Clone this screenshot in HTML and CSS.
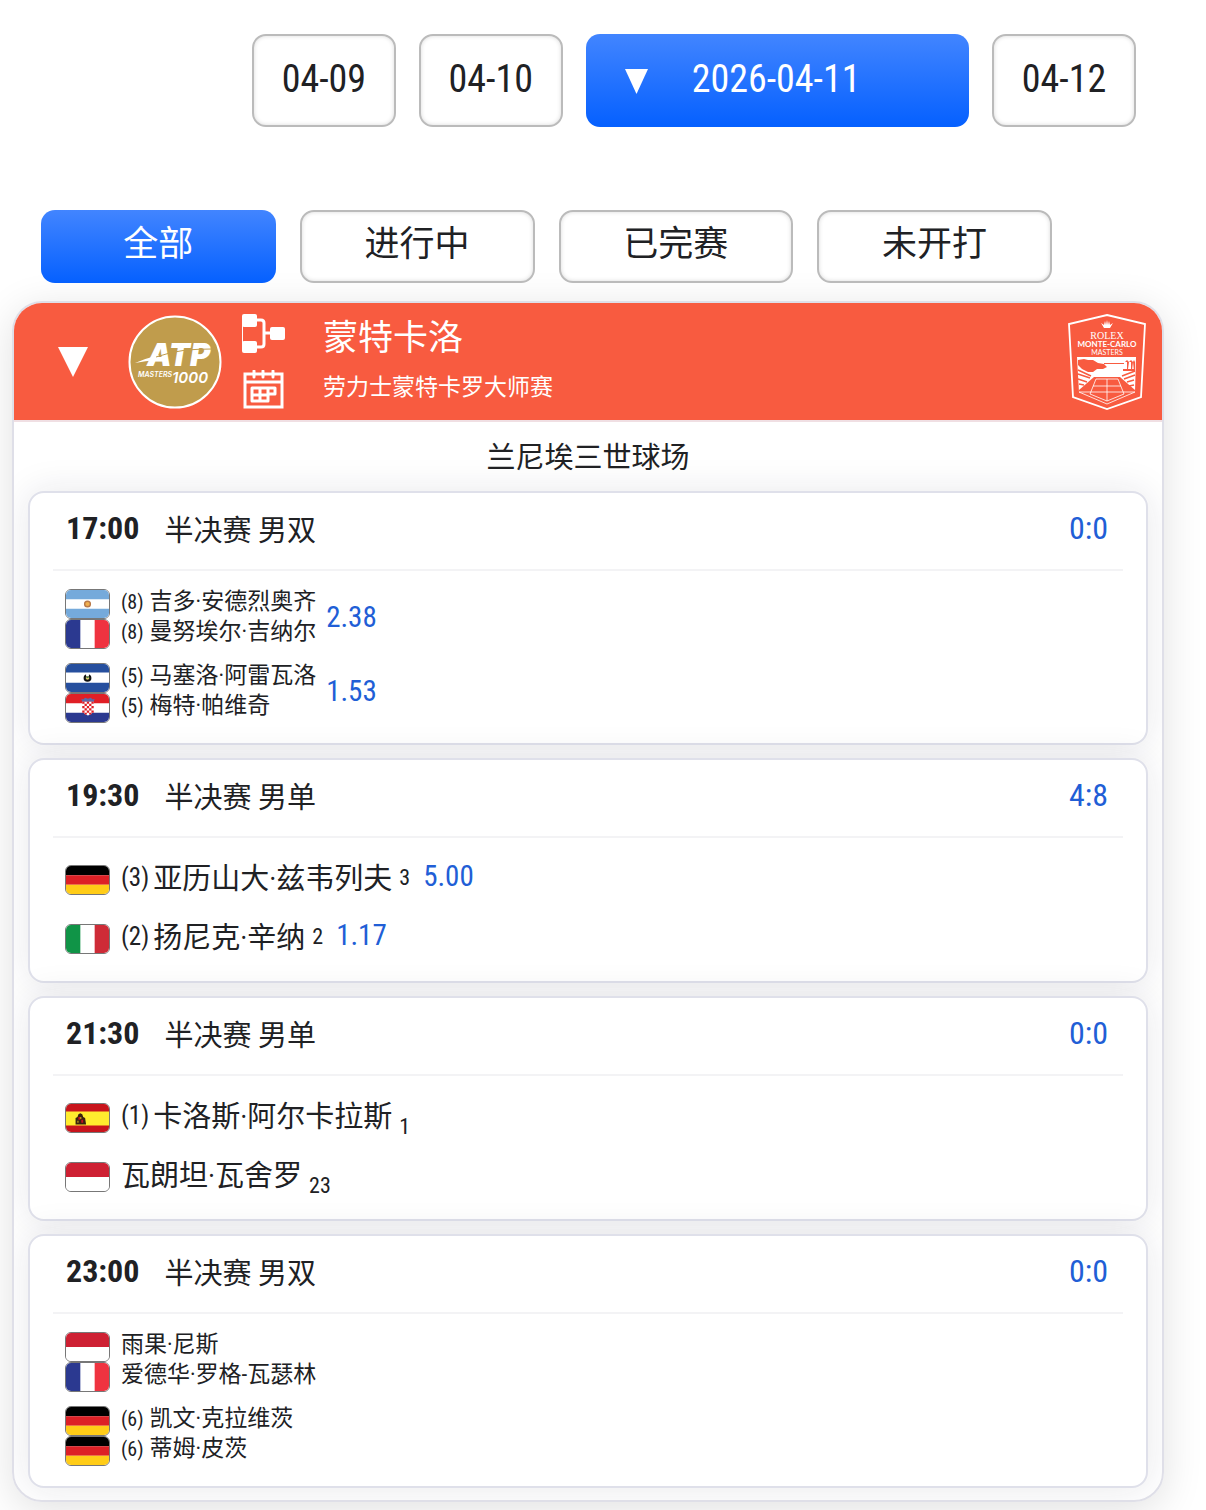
FILE: index.html
```html
<!DOCTYPE html>
<html lang="zh-CN">
<head>
    <meta charset="UTF-8">
    <meta name="viewport" content="width=device-width, initial-scale=1.0">
    <title>蒙特卡洛 2026-04-11</title>
    <link rel="stylesheet" href="styles.css">
</head>
<body>
    <!-- Flags shared by all matches -->
    <svg class="sprite" aria-hidden="true">
        <symbol id="arg" viewBox="0 0 45 30" preserveAspectRatio="none">
            <path fill="#fff" d="M0 0h45v30H0z"/>
            <path fill="#75aadb" d="M0 0h45v10H0zM0 20h45v10H0z"/>
            <circle cx="22.500" cy="15" r="3" fill="#f0b050" stroke="#b97a4a" stroke-width="1.500"/>
        </symbol>
        <symbol id="fra" viewBox="0 0 45 30" preserveAspectRatio="none">
            <path fill="#fff" d="M0 0h45v30H0z"/>
            <path fill="#2b3990" d="M0 0h15v30H0z"/>
            <path fill="#ef3340" d="M30 0h15v30H30z"/>
        </symbol>
        <symbol id="esa" viewBox="0 0 45 30" preserveAspectRatio="none">
            <path fill="#fff" d="M0 0h45v30H0z"/>
            <path fill="#264f9e" d="M0 0h45v9H0zM0 20h45v10H0z"/>
            <circle cx="22.500" cy="15" r="3" fill="#d9c56a" stroke="#111" stroke-width="2.200"/>
            <path fill="#fff" d="M21 10h3v3h-3z"/>
            <path fill="#3a7d44" d="M21 15l1.500-2 1.500 2z"/>
        </symbol>
        <symbol id="cro" viewBox="0 0 45 30" preserveAspectRatio="none">
            <path fill="#fff" d="M0 0h45v30H0z"/>
            <path fill="#e01f26" d="M0 0h45v10H0z"/>
            <path fill="#2b3990" d="M0 20h45v10H0z"/>
            <path fill="#fff" d="M17 8h12v9q0 4-6 6-6-2-6-6z"/>
            <path fill="#e01f26" d="M17 8h2.400v2.400H17zM21.800 8h2.400v2.400h-2.400zM26.600 8H29v2.400h-2.400zM19.400 10.400h2.400v2.400h-2.400zM24.200 10.400h2.400v2.400h-2.400zM17 12.800h2.400v2.400H17zM21.800 12.800h2.400v2.400h-2.400zM26.600 12.800H29v2.400h-2.400zM19.400 15.200h2.400v2.400h-2.400zM24.200 15.200h2.400v2.400h-2.400zM17 17.600h2.400V20H17zM21.800 17.600h2.400V20h-2.400zM26.600 17.600H29V20h-2.400zM19.400 20h2.400v2h-2.400zM24.200 20h2.400v2h-2.400z"/>
            <path fill="#5b6aa8" d="M16 5l2 1 2-2 3 1 3-1 2 2 2-1-1 3H17z"/>
        </symbol>
        <symbol id="ger" viewBox="0 0 45 30" preserveAspectRatio="none">
            <path d="M0 0h45v10H0z"/>
            <path fill="#dd2026" d="M0 10h45v10H0z"/>
            <path fill="#ffcc17" d="M0 20h45v10H0z"/>
        </symbol>
        <symbol id="ita" viewBox="0 0 45 30" preserveAspectRatio="none">
            <path fill="#fff" d="M0 0h45v30H0z"/>
            <path fill="#109447" d="M0 0h15v30H0z"/>
            <path fill="#ce2b37" d="M30 0h15v30H30z"/>
        </symbol>
        <symbol id="esp" viewBox="0 0 45 30" preserveAspectRatio="none">
            <path fill="#c8141c" d="M0 0h45v30H0z"/>
            <path fill="#ffec2e" d="M0 8h45v15H0z"/>
            <path fill="#3a2010" d="M10 22v-7l2-1 1-3 2-1 2 1 1 3 2 1 1 7z"/>
            <path fill="#c8141c" d="M13 14h2v3h-2zM16 17h2v3h-2z"/>
            <path fill="#e8c020" d="M15 14h1v2h-1zM12 18h1v2h-1z"/>
        </symbol>
        <symbol id="mon" viewBox="0 0 45 30" preserveAspectRatio="none">
            <path fill="#fff" d="M0 0h45v30H0z"/>
            <path fill="#ce2033" d="M0 0h45v15H0z"/>
        </symbol>
    </svg>

    <nav class="dates" aria-label="日期">
        <button class="btn date">04-09</button>
        <button class="btn date">04-10</button>
        <div class="date-picker">
            <select class="btn date active" aria-label="选择日期">
                <option>2026-04-11</option>
            </select>
            <svg class="picker-arrow" viewBox="0 0 24 24" preserveAspectRatio="none" aria-hidden="true"><path fill="#fff" d="M0 0h24L12 24z"/></svg>
        </div>
        <button class="btn date">04-12</button>
    </nav>

    <nav class="filters" aria-label="比赛状态">
        <button class="btn filter active">全部</button>
        <button class="btn filter">进行中</button>
        <button class="btn filter">已完赛</button>
        <button class="btn filter">未开打</button>
    </nav>

    <main class="tournament">
        <header class="tour-header">
            <button class="toggle" aria-label="收起">
                <svg viewBox="0 0 30 30"><path fill="#fff" d="M0 0h30L15 30z"/></svg>
            </button>
            <svg class="atp" viewBox="0 0 94 94" role="img" aria-label="ATP Masters 1000">
                <circle cx="47" cy="47" r="45.500" fill="#c09c4c" stroke="#fff" stroke-width="2"/>
                <text class="atp-name" x="19" y="51">ATP</text>
                <path fill="#fff" d="M7 48q12-5 24-8l-2 5q-12 1-22 3z"/>
                <path fill="none" stroke="#c09c4c" d="M28 42q14-5 30-7 14-1 26-1"/>
                <text class="atp-masters" x="10" y="62">MASTERS</text>
                <text class="atp-level" x="44" y="68">1000</text>
            </svg>
            <div class="tour-links">
                <a href="#draw" aria-label="签表">
                    <svg viewBox="0 0 44 40" fill="#fff">
                        <rect x="0" y="0" width="15" height="13" rx="2"/>
                        <rect x="0" y="27" width="15" height="12" rx="2"/>
                        <rect x="28" y="13" width="15" height="13" rx="2"/>
                        <path fill="none" stroke="#fff" stroke-width="3" d="M14 6h5q3 0 3 3v21q0 3-3 3h-5M22 19h7"/>
                        <path d="M0 4h1v31H0z"/>
                    </svg>
                </a>
                <a href="#schedule" aria-label="赛程">
                    <svg viewBox="0 0 44 40" fill="none" stroke="#fff" stroke-width="3">
                        <path d="M3 4h37v33H3zM3 12h37"/>
                        <path stroke-linecap="round" d="M12 1v6M21 1v6M31 1v6"/>
                        <path stroke-linejoin="round" d="M10 18h23v6h-7v7H10zM10 25h16M18 18v13M26 18v7"/>
                    </svg>
                </a>
            </div>
            <div class="tour-title">
                <h1>蒙特卡洛</h1>
                <p>劳力士蒙特卡罗大师赛</p>
            </div>
            <svg class="event-logo" viewBox="0 0 78 98" role="img" aria-label="Rolex Monte-Carlo Masters">
                <path fill="none" stroke="#fff" stroke-width="1.800" d="M39 2l38 9-4 73-34 12L5 84 1 11z"/>
                <path fill="#fff" d="M36 15l-3-5 3 2 1-4 1 4 1-5 1 5 1-4 1 4 3-2-3 5z"/>
                <text class="logo-rolex" x="39" y="26">ROLEX</text>
                <text class="logo-name" x="39" y="34">MONTE-CARLO</text>
                <text class="logo-sub" x="39" y="42">MASTERS</text>
                <!-- bay, stands and court -->
                <path fill="#fff" d="M9 44h59l-1 35H11z"/>
                <path fill="#f85b40" d="M10 47l6-1 4 1 5 0 5 3 6 1 3 3-4 2-6 0-4 3-5 0-6-3-4-4zM36 50h20v1H36zM57 49l2-2 2 2-1 7h-1v-7zM61 49l2-2 2 2-1 8h-1v-8zM65 49l1-2 1 2v9h-1zM55 56h12v2H55z"/>
                <path fill="#f85b40" d="M26 64h26l15 13v2H11v-2z"/>
                <path fill="none" stroke="#f85b40" stroke-width="1.500" d="M10 57l13 6M10 61l12 4M10 66l9 3M11 71l5 1M67 58l-13 5M67 62l-11 4M66 67l-7 2M66 72l-5 1"/>
                <path fill="none" stroke="#fff" stroke-width=".8" d="M28 66h22l6 15-17 7-17-7zM39 66v22M25 73h28M11 79h56l-28 12-28-12"/>
            </svg>
        </header>

        <h2 class="court">兰尼埃三世球场</h2>

        <section class="match">
            <div class="match-head">
                <time>17:00</time>
                <span class="round">半决赛 男双</span>
                <a class="score" href="#m1">0:0</a>
            </div>
            <div class="players doubles">
                <div class="team">
                    <div class="names">
                        <p><svg class="flag"><use href="#arg"/></svg><span class="seed">(8)</span><span>吉多·安德烈奥齐</span></p>
                        <p><svg class="flag"><use href="#fra"/></svg><span class="seed">(8)</span><span>曼努埃尔·吉纳尔</span></p>
                    </div>
                    <span class="odds">2.38</span>
                </div>
                <div class="team">
                    <div class="names">
                        <p><svg class="flag"><use href="#esa"/></svg><span class="seed">(5)</span><span>马塞洛·阿雷瓦洛</span></p>
                        <p><svg class="flag"><use href="#cro"/></svg><span class="seed">(5)</span><span>梅特·帕维奇</span></p>
                    </div>
                    <span class="odds">1.53</span>
                </div>
            </div>
        </section>

        <section class="match">
            <div class="match-head">
                <time>19:30</time>
                <span class="round">半决赛 男单</span>
                <a class="score" href="#m2">4:8</a>
            </div>
            <div class="players singles">
                <p><svg class="flag"><use href="#ger"/></svg><span class="seed">(3)</span><span>亚历山大·兹韦列夫</span><span class="rank">3</span><span class="odds">5.00</span></p>
                <p><svg class="flag"><use href="#ita"/></svg><span class="seed">(2)</span><span>扬尼克·辛纳</span><span class="rank">2</span><span class="odds">1.17</span></p>
            </div>
        </section>

        <section class="match">
            <div class="match-head">
                <time>21:30</time>
                <span class="round">半决赛 男单</span>
                <a class="score" href="#m3">0:0</a>
            </div>
            <div class="players singles">
                <p><svg class="flag"><use href="#esp"/></svg><span class="seed">(1)</span><span>卡洛斯·阿尔卡拉斯</span><sub class="rank">1</sub></p>
                <p><svg class="flag"><use href="#mon"/></svg><span>瓦朗坦·瓦舍罗</span><sub class="rank">23</sub></p>
            </div>
        </section>

        <section class="match">
            <div class="match-head">
                <time>23:00</time>
                <span class="round">半决赛 男双</span>
                <a class="score" href="#m4">0:0</a>
            </div>
            <div class="players doubles">
                <div class="team">
                    <div class="names">
                        <p><svg class="flag"><use href="#mon"/></svg><span>雨果·尼斯</span></p>
                        <p><svg class="flag"><use href="#fra"/></svg><span>爱德华·罗格-瓦瑟林</span></p>
                    </div>
                </div>
                <div class="team">
                    <div class="names">
                        <p><svg class="flag"><use href="#ger"/></svg><span class="seed">(6)</span><span>凯文·克拉维茨</span></p>
                        <p><svg class="flag"><use href="#ger"/></svg><span class="seed">(6)</span><span>蒂姆·皮茨</span></p>
                    </div>
                </div>
            </div>
        </section>
    </main>
</body>
</html>
```
FILE: styles.css
```css
* {
    box-sizing: border-box;
}
body {
    margin: 0;
    padding: 34px 0 8px;
    background: #fff;
    color: #202124;
    font-family: "Roboto Condensed", Roboto, "Noto Sans CJK SC", sans-serif;
    font-weight: 400;
}
h1, h2, p {
    margin: 0;
    font-weight: 400;
}
svg {
    display: block;
}
.sprite {
    position: absolute;
    width: 0;
    height: 0;
}

/* buttons */
.btn {
    width: 100%;
    border: 2px solid #bbb;
    border-radius: 14px;
    background: #fff;
    box-shadow: inset 0 0 4px rgba(0, 0, 0, 0.15);
    color: #202124;
    font-family: inherit;
}
.btn.active {
    border: 0;
    background: linear-gradient(#4285ff, #0560ff);
    box-shadow: none;
    color: #fff;
}
.dates {
    display: grid;
    grid-template-columns: 3fr 3fr 8fr 3fr;
    gap: 23px;
    padding: 0 70px 0 252px;
}
.date {
    height: 93px;
    padding: 0 0 4px;
    font-size: 38px;
}
.date-picker {
    position: relative;
}
.date-picker .date {
    appearance: none;
    padding-left: 106px;
}
.picker-arrow {
    position: absolute;
    left: 39px;
    top: 35px;
    width: 23px;
    height: 25px;
    pointer-events: none;
}
.filters {
    display: grid;
    grid-template-columns: repeat(4, 1fr);
    gap: 24px;
    margin-top: 83px;
    padding: 0 154px 0 41px;
}
.filter {
    height: 73px;
    padding: 0 0 12px;
    font-size: 35px;
}

/* tournament */
.tournament {
    margin: 18px 42px 0 12px;
    padding-bottom: 12px;
    border: 2px solid #dfdfe8;
    border-radius: 30px;
    overflow: hidden;
    box-shadow: 0 8px 40px rgba(0, 0, 0, 0.12);
}
.tour-header {
    display: flex;
    align-items: center;
    height: 119px;
    padding: 0 16px 0 44px;
    border-bottom: 2px solid #f0dfe3;
    background: #f85b40;
    color: #fff;
}
.toggle {
    width: 30px;
    height: 30px;
    margin-right: 40px;
    padding: 0;
    border: 0;
    background: none;
}
.atp {
    width: 94px;
    height: 94px;
    margin-right: 20px;
}
.atp text {
    fill: #fff;
    font-family: Inter, sans-serif;
    font-style: italic;
}
.atp .atp-name {
    font-size: 31px;
    font-weight: 900;
}
.atp .atp-masters {
    font-size: 7px;
    font-weight: 600;
}
.atp .atp-level {
    font-size: 15px;
    font-weight: 600;
}
.tour-links {
    display: grid;
    gap: 16px;
}
.tour-links svg {
    width: 44px;
    height: 40px;
}
.tour-title {
    margin-left: 37px;
}
.tour-title h1 {
    font-size: 35px;
    line-height: 52px;
}
.tour-title p {
    font-size: 23px;
    line-height: 46px;
}
.event-logo {
    width: 78px;
    height: 98px;
    margin-left: auto;
}
.event-logo text {
    fill: #fff;
    text-anchor: middle;
}
.event-logo .logo-rolex {
    font-family: "Liberation Serif", serif;
    font-size: 10px;
}
.event-logo .logo-name {
    font-family: Lato, sans-serif;
    font-size: 8px;
    font-weight: 700;
}
.event-logo .logo-sub {
    font-family: Lato, sans-serif;
    font-size: 7px;
}
.court {
    padding-top: 4px;
    font-size: 29px;
    line-height: 65px;
    text-align: center;
}

/* matches */
.match {
    margin: 0 14px 13px;
    padding: 0 23px;
    border: 2px solid #dfe0ea;
    border-radius: 16px;
    background: #fff;
    box-shadow: 0 0 36px rgba(30, 30, 60, 0.1);
}
.match:last-child {
    margin-bottom: 0;
}
.match-head {
    display: flex;
    align-items: center;
    height: 78px;
    padding: 0 15px 6px 13px;
    border-bottom: 2px solid #f3f3f5;
}
.match-head time {
    font-size: 32px;
    font-weight: 700;
}
.round {
    margin-left: 25px;
    font-size: 29px;
}
.score {
    margin-left: auto;
    font-size: 32px;
}
.score, .odds {
    color: #215ed6;
    text-decoration: none;
}
.odds {
    font-size: 29px;
}
.players {
    padding-left: 12px;
}
.players p {
    display: flex;
    align-items: center;
}
.flag {
    width: 45px;
    height: 30px;
    margin-right: 11px;
    border: 1px solid #777;
    border-radius: 6px;
}
.doubles {
    display: grid;
    gap: 14px;
    padding-top: 18px;
    padding-bottom: 20px;
}
.team {
    display: flex;
    align-items: center;
}
.doubles p {
    height: 30px;
    font-size: 23px;
    line-height: 24px;
}
.doubles span {
    padding-bottom: 4px;
}
.doubles .seed {
    margin-right: 6px;
    font-size: 20px;
}
.doubles .odds {
    margin-left: 10px;
}
.singles {
    padding-top: 12px;
    padding-bottom: 13px;
}
.singles p {
    height: 59px;
    padding-bottom: 8px;
    font-size: 29px;
}
.singles .flag {
    margin-top: 8px;
}
.singles .seed {
    margin-right: 4px;
    padding-top: 4px;
    font-size: 25px;
}
.rank {
    margin-left: 7px;
    padding-top: 4px;
    font-size: 22px;
}
sub.rank {
    align-self: flex-end;
}
.singles .odds {
    margin-left: 13px;
}
```
